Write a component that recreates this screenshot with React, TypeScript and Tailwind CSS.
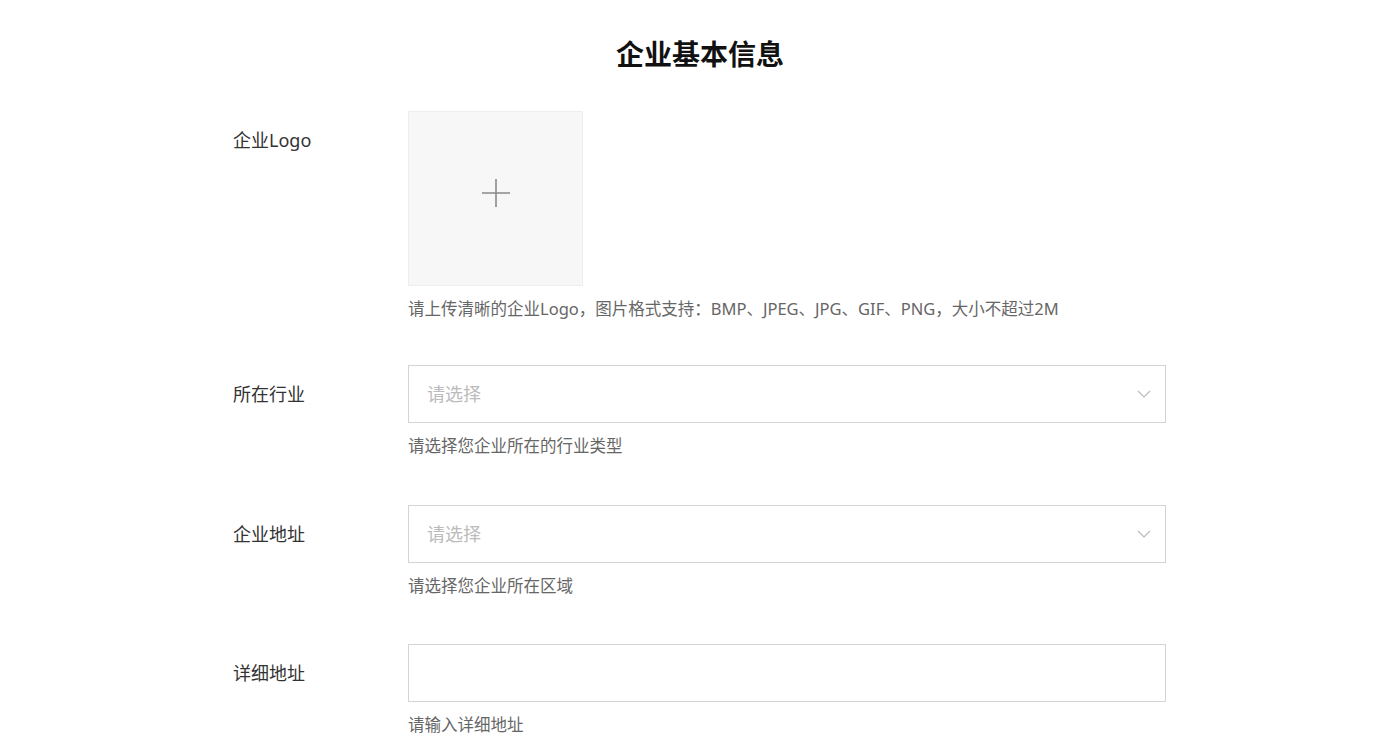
import React from 'react';

const Chevron = () => (
  <svg width="14" height="8" viewBox="0 0 14 8" fill="none" className="absolute right-[14px] top-1/2 -translate-y-1/2">
    <path d="M1 1l6 6 6-6" stroke="#bbbbbb" strokeWidth="1.2" />
  </svg>
);

const FieldLabel = ({ children }: { children: React.ReactNode }) => (
  <div className="w-[175px] shrink-0 h-[58px] flex items-center text-[18px] text-[#333333]">{children}</div>
);

const Hint = ({ children }: { children: React.ReactNode }) => (
  <p className="mt-[11px] text-[16.5px] leading-6 text-[#666666]">{children}</p>
);

const SelectBox = () => (
  <div className="relative h-[58px] w-full border border-[#d4d4d4] bg-white flex items-center pl-[18px] text-[18px] text-[#bbbbbb]">
    请选择
    <Chevron />
  </div>
);

export default function App() {
  return (
    <div className="min-h-screen bg-white" style={{ fontFamily: '"Noto Sans", "Noto Sans CJK SC", sans-serif' }}>
      <h1 className="pt-[33px] text-center text-[28px] leading-10 font-bold text-[#111111]" style={{ fontFamily: '"Noto Sans CJK SC", sans-serif' }}>企业基本信息</h1>

      <div className="mx-auto w-[934px] mt-[38px]">
        {/* Logo */}
        <div className="flex mb-[44px]">
          <FieldLabel>企业Logo</FieldLabel>
          <div className="w-[758px]">
            <div className="w-[175px] h-[175px] bg-[#f7f7f7] border border-[#eeeeee] flex items-center justify-center">
              <svg width="30" height="30" viewBox="0 0 30 30" className="-mt-[12px]">
                <path d="M15 1v28M1 15h28" stroke="#8a8a8a" strokeWidth="1.6" />
              </svg>
            </div>
            <Hint>请上传清晰的企业Logo，图片格式支持：BMP、JPEG、JPG、GIF、PNG，大小不超过2M</Hint>
          </div>
        </div>

        {/* 所在行业 */}
        <div className="flex mb-[47px]">
          <FieldLabel>所在行业</FieldLabel>
          <div className="w-[758px]">
            <SelectBox />
            <Hint>请选择您企业所在的行业类型</Hint>
          </div>
        </div>

        {/* 企业地址 */}
        <div className="flex mb-[46px]">
          <FieldLabel>企业地址</FieldLabel>
          <div className="w-[758px]">
            <SelectBox />
            <Hint>请选择您企业所在区域</Hint>
          </div>
        </div>

        {/* 详细地址 */}
        <div className="flex">
          <FieldLabel>详细地址</FieldLabel>
          <div className="w-[758px]">
            <input type="text" className="block h-[58px] w-full border border-[#d4d4d4] bg-white px-[18px] text-[18px] text-[#333333] outline-none" />
            <Hint>请输入详细地址</Hint>
          </div>
        </div>
      </div>
    </div>
  );
}
